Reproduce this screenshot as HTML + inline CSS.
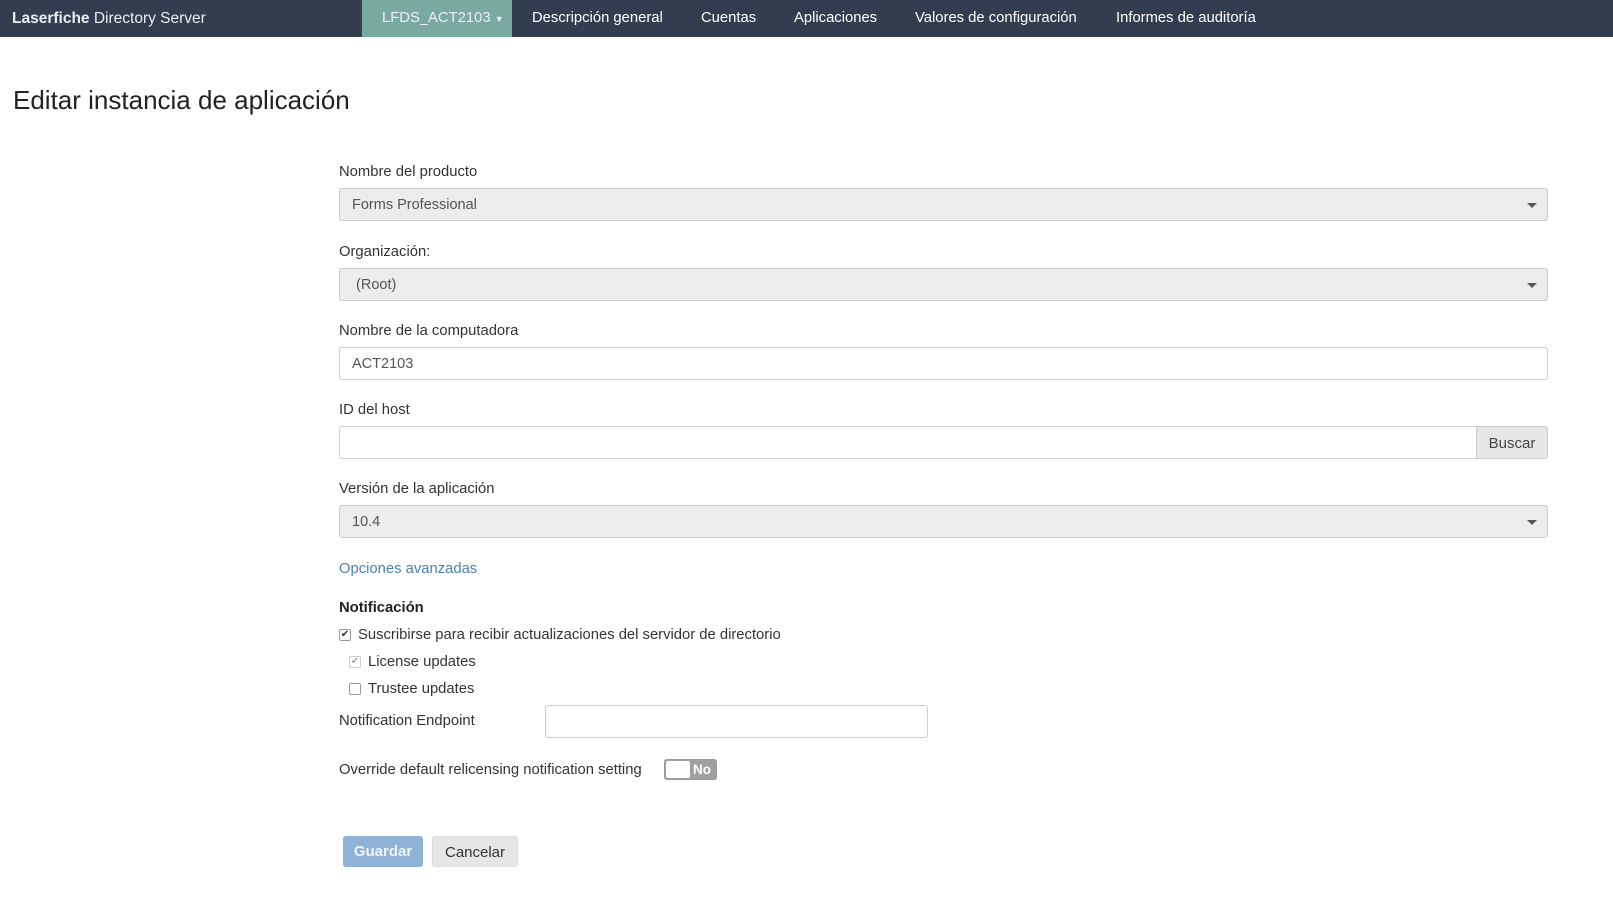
<!DOCTYPE html>
<html><head><meta charset="utf-8"><style>
*{box-sizing:border-box;margin:0;padding:0}
body{width:1613px;height:913px;background:#fff;font-family:"Liberation Sans",sans-serif;font-size:14.8px;color:#333;position:relative;overflow:hidden}
.nav{position:absolute;left:0;top:0;width:1613px;height:37px;background:#323e4f;color:#fff}
.nav span{position:absolute;top:10px;font-size:14.8px}
.brand{left:12px;font-size:15.5px!important;color:#e9edf2}
.tab{position:absolute;left:362px;top:0;width:150px;height:37px;background:#7aa9a0}
.a{position:absolute}
h1{position:absolute;left:13px;top:85px;font-size:26px;font-weight:normal;color:#222}
.lbl{position:absolute;left:339px}
.inp{position:absolute;left:339px;width:1209px;height:33px;border:1px solid #ccc;border-radius:3px;background:#fff;padding:8px 12px;font-size:14.5px;color:#555}
.sel{background:#ececec}
.car{position:absolute;right:10px;top:14px;border-left:5px solid transparent;border-right:5px solid transparent;border-top:5px solid #555}
.cb{position:absolute;width:12px;height:12px;border:1px solid #999;border-radius:2px;background:#fff;font-size:10px;line-height:10px;text-align:center}
.btn{position:absolute;height:31px;border-radius:3px;font-size:15px;text-align:center;line-height:31px}
</style></head><body>
<div class="nav">
<div class="tab"></div>
<span class="brand"><b>Laserfiche</b> Directory Server</span>
<span style="left:382px;color:#eef">LFDS_ACT2103 <small style="font-size:9px">▼</small></span>
<span style="left:532px">Descripción general</span>
<span style="left:701px">Cuentas</span>
<span style="left:794px">Aplicaciones</span>
<span style="left:915px">Valores de configuración</span>
<span style="left:1116px">Informes de auditoría</span>
</div>
<h1>Editar instancia de aplicación</h1>

<div class="lbl" style="top:164px">Nombre del producto</div>
<div class="inp sel" style="top:188px">Forms Professional<div class="car"></div></div>
<div class="lbl" style="top:244px">Organización:</div>
<div class="inp sel" style="top:268px">&nbsp;(Root)<div class="car"></div></div>
<div class="lbl" style="top:323px">Nombre de la computadora</div>
<div class="inp" style="top:347px">ACT2103</div>
<div class="lbl" style="top:402px">ID del host</div>
<div class="inp" style="top:426px;width:1138px;border-radius:3px 0 0 3px"></div>
<div class="btn" style="left:1476px;top:426px;width:72px;height:33px;line-height:33px;background:#e6e6e6;border:1px solid #ccc;border-radius:0 3px 3px 0;color:#444">Buscar</div>
<div class="lbl" style="top:481px">Versión de la aplicación</div>
<div class="inp sel" style="top:505px">10.4<div class="car"></div></div>
<div class="lbl" style="top:561px;color:#4a7fb5">Opciones avanzadas</div>
<div class="lbl" style="top:600px;font-weight:bold;color:#222">Notificación</div>
<div class="cb" style="left:339px;top:629px;color:#333">✔</div>
<div class="lbl" style="left:358px;top:627px">Suscribirse para recibir actualizaciones del servidor de directorio</div>
<div class="cb" style="left:349px;top:656px;color:#aaa;border-color:#ccc">✔</div>
<div class="lbl" style="left:368px;top:654px">License updates</div>
<div class="cb" style="left:349px;top:683px"></div>
<div class="lbl" style="left:368px;top:681px">Trustee updates</div>
<div class="lbl" style="top:713px">Notification Endpoint</div>
<div class="inp" style="left:545px;top:705px;width:383px"></div>
<div class="lbl" style="top:762px">Override default relicensing notification setting</div>
<div class="a" style="left:664px;top:759px;width:53px;height:21px;background:#a0a0a0;border-radius:3px;border:1px solid #999"><div style="position:absolute;left:1px;top:1px;width:24px;height:17px;background:#fff;border-radius:2px"></div><span style="position:absolute;left:28px;top:2px;color:#fff;font-weight:bold;font-size:13.5px">No</span></div>
<div class="btn" style="left:343px;top:836px;width:80px;background:#8fb3d6;color:#eef4fa;font-weight:bold">Guardar</div>
<div class="btn" style="left:432px;top:836px;width:86px;background:#e6e6e6;border:1px solid #ddd;color:#333">Cancelar</div>
</body></html>
